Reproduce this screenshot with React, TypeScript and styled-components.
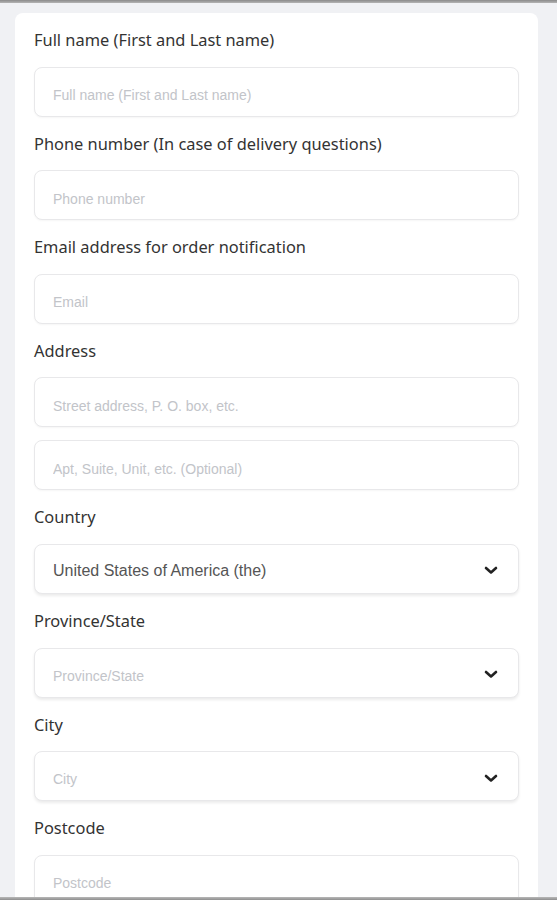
import styled, { createGlobalStyle } from "styled-components";

const GlobalStyle = createGlobalStyle`
  html, body {
    margin: 0;
    padding: 0;
    background: #f0f1f4;
  }
  body {
    font-family: "Noto Sans", "Liberation Sans", Arial, sans-serif;
    overflow: hidden;
  }
`;

type FieldData = {
  label: string;
  inputs: { placeholder?: string; value?: string; select?: boolean }[];
};

const fields: FieldData[] = [
  { label: "Full name (First and Last name)", inputs: [{ placeholder: "Full name (First and Last name)" }] },
  { label: "Phone number (In case of delivery questions)", inputs: [{ placeholder: "Phone number" }] },
  { label: "Email address for order notification", inputs: [{ placeholder: "Email" }] },
  {
    label: "Address",
    inputs: [
      { placeholder: "Street address, P. O. box, etc." },
      { placeholder: "Apt, Suite, Unit, etc. (Optional)" },
    ],
  },
  { label: "Country", inputs: [{ value: "United States of America (the)", select: true }] },
  { label: "Province/State", inputs: [{ placeholder: "Province/State", select: true }] },
  { label: "City", inputs: [{ placeholder: "City", select: true }] },
  { label: "Postcode", inputs: [{ placeholder: "Postcode" }] },
];

const Chevron = () => (
  <svg width="14" height="9" viewBox="0 0 14 9" fill="none">
    <path d="M2 2L7 6.5L12 2" stroke="#222" strokeWidth="2.6" strokeLinecap="round" strokeLinejoin="round" />
  </svg>
);

const App = () => {
  return (
    <>
      <GlobalStyle />
      <TopBar />
      <Page>
        <Card>
          {fields.map((f) => (
            <Field key={f.label}>
              <Label>{f.label}</Label>
              <Inputs>
                {f.inputs.map((inp, i) =>
                  inp.select ? (
                    <SelectBox key={i} hasValue={!!inp.value}>
                      <SelectText hasValue={!!inp.value}>{inp.value ?? inp.placeholder}</SelectText>
                      <Chevron />
                    </SelectBox>
                  ) : (
                    <Input key={i} placeholder={inp.placeholder} />
                  )
                )}
              </Inputs>
            </Field>
          ))}
        </Card>
      </Page>
      <BottomBar />
    </>
  );
};
export default App;

const TopBar = styled.div`
  height: 3px;
  background: linear-gradient(to bottom, #8a8a8a, #b4b4b4);
`;

const BottomBar = styled.div`
  position: fixed;
  left: 0;
  right: 0;
  bottom: 0;
  height: 3px;
  background: linear-gradient(to bottom, #b8b8b8, #8e8e8e);
`;

const Page = styled.div`
  padding: 10px 19px 0 15px;
  height: 897px;
  box-sizing: border-box;
`;

const Card = styled.div`
  background: #fff;
  border-radius: 8px;
  padding: 15px 19px 20px;
  display: flex;
  flex-direction: column;
  gap: 15px;
`;

const Field = styled.div`
  display: flex;
  flex-direction: column;
  gap: 14px;
`;

const Label = styled.div`
  font-size: 16.4px;
  line-height: 24.6px;
  color: #333;
  white-space: nowrap;
`;

const Inputs = styled.div`
  display: flex;
  flex-direction: column;
  gap: 13px;
`;

const boxBase = `
  height: 50px;
  box-sizing: border-box;
  border: 1px solid #e8e8ea;
  border-radius: 8px;
  background: #fff;
  font-family: "Liberation Sans", Arial, sans-serif;
`;

const Input = styled.input`
  ${boxBase}
  width: 100%;
  padding: 7px 18px 0;
  font-size: 14px;
  color: #333;
  outline: none;
  box-shadow: 0 1px 2px rgba(0, 0, 0, 0.04);
  &::placeholder {
    color: #c2c4c9;
  }
`;

const SelectBox = styled.div<{ hasValue: boolean }>`
  ${boxBase}
  display: flex;
  align-items: center;
  justify-content: space-between;
  padding: 4px 20px 0 18px;
  box-shadow: 0 2px 3px rgba(0, 0, 0, 0.08);
`;

const SelectText = styled.span<{ hasValue: boolean }>`
  font-size: ${({ hasValue }) => (hasValue ? "16px" : "14px")};
  color: ${({ hasValue }) => (hasValue ? "#555" : "#c2c4c9")};
  padding-top: ${({ hasValue }) => (hasValue ? "0" : "2px")};
`;
